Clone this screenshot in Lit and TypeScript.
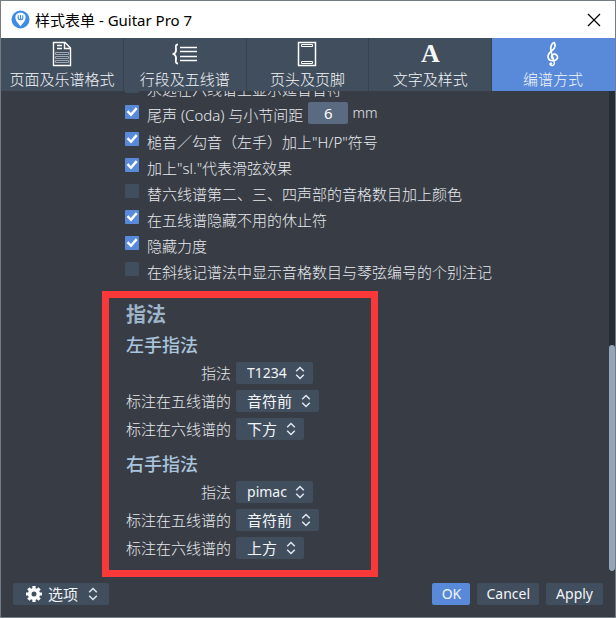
import { LitElement, html, css, svg, nothing } from "lit";
import { customElement, property, state } from "lit/decorators.js";
import { classMap } from "lit/directives/class-map.js";

const pageIcon = svg`<svg width="20" height="26" viewBox="0 0 20 26" fill="none" stroke="#fff">
  <path d="M1.5 1.5H13L18.5 7V24.5H1.5Z" stroke-width="1.4"/>
  <path d="M12.5 1.5V7.5H18.5M5 4.5H10M5 7.5H10" stroke-width="1.4"/>
  <path d="M3.500 11.500H16.500V13.500H3.500ZM3.500 15.500H16.500V17.500H3.500ZM3.500 19.500H16.500V21.500H3.500Z" stroke="#9ca8b6" stroke-width="1"/>
</svg>`;

const staffIcon = svg`<svg width="26" height="26" viewBox="0 0 26 26" fill="none" stroke="#fff">
  <path d="M6 3.500C3.200 3.500 3.800 5.500 4 8C4.200 10.500 4 12 1.500 13C4 14 4.200 15.500 4 18C3.800 20.500 3.200 22.500 6 22.500" stroke-width="1.800"/>
  <path d="M8 6.500H25M8 10.500H25M8 15.500H25M8 19.500H25" stroke-width="1.300"/>
</svg>`;

const headerIcon = svg`<svg width="20" height="26" viewBox="0 0 20 26" fill="none" stroke="#fff">
  <path d="M1.500 1.500H18.500V24.500H1.500Z" stroke-width="1.500"/>
  <path d="M4.500 3.500H15.500V5.500H4.500ZM4.500 20.500H15.500V22.500H4.500Z"/>
</svg>`;

const clefIcon = svg`<svg width="14" height="26" viewBox="0 0 14 26" fill="none" stroke="#fff" stroke-linecap="round">
  <path d="M5 10.500C3.800 5.500 6 2 8.200 1.500C9.800 4 9 7 6.500 9.200C3.500 11.600 1.600 13.500 2 16.200C2.500 19 5.200 20 8 19.600C11.500 19 12.300 16 10.800 14.200C9.200 12.400 6 13 5.600 15.200C5.400 16.500 6.200 17.400 7.200 17.600" stroke-width="1.700"/>
  <path d="M5 10L8.300 21.500C8.700 24 6.600 25 5 24.400C4 24 3.700 23.200 4.300 22.400" stroke-width="1.300"/>
  <circle cx="5" cy="22.800" r="1.300" fill="#fff" stroke="none"/>
</svg>`;

const arrows = svg`<svg class="arrows" width="10" height="14" viewBox="0 0 10 14" fill="none" stroke="#dfe6ee" stroke-width="1.500">
  <path d="M1.200 5.300L5 1.500L8.800 5.300M1.200 8.700L5 12.500L8.800 8.700"/>
</svg>`;

const gear = svg`<svg width="16" height="16" viewBox="0 0 16 16">
  <circle cx="8" cy="8" r="4.300" fill="none" stroke="#fff" stroke-width="3.600"/>
  <path d="M8 0V3M8 13V16M0 8H3M13 8H16M2.350 2.350L4.400 4.400M11.600 11.600L13.650 13.650M2.350 13.650L4.400 11.600M11.600 4.400L13.650 2.350" stroke="#fff" stroke-width="3.200"/>
</svg>`;

const logo = svg`<svg width="19" height="19" viewBox="0 0 19 19">
  <circle cx="9.500" cy="9.500" r="9" fill="#3d8de6"/>
  <path d="M9.500 16.200C7.600 13.600 4.400 11 4.400 7.400C4.400 4.400 6.700 2.800 9.500 2.800S14.600 4.400 14.600 7.400C14.600 11 11.400 13.600 9.500 16.200Z" fill="#fff"/>
  <path d="M7.200 5.200V8C7.200 10.200 11.800 10.200 11.800 8V5.200M9.500 5V9.500" fill="none" stroke="#3d8de6" stroke-width="1.100"/>
</svg>`;

const sans = css`"Noto Sans", "Noto Sans CJK SC", sans-serif`;

@customElement("pick-list")
class PickList extends LitElement {
  @property() value = "";
  @property() name = "";

  static styles = css`
    :host { display: inline-grid; justify-self: start; }
    .pick {
      grid-area: 1 / 1; appearance: none; height: 22px; margin: 0; border: 0; border-radius: 2px;
      padding: 0 26px 0 11px; background: #414e5e; color: #f2f5f8;
      font: 15px/22px ${sans}; outline: none;
    }
    .latin { font-size: 14px; }
    .arrows { grid-area: 1 / 1; place-self: center end; margin-right: 8px; pointer-events: none; }
  `;

  render() {
    const latin = /^[\x00-\x7f]+$/.test(this.value);
    return html`<select class=${classMap({ pick: true, latin })} aria-label=${this.name}>
        <option>${this.value}</option></select>${arrows}`;
  }
}

interface Check { text: string; on: boolean; amount?: string; unit?: string; }

@customElement("app-root")
class AppRoot extends LitElement {
  @state() private active = 4;

  private tabs = [
    { label: "页面及乐谱格式", icon: pageIcon },
    { label: "行段及五线谱", icon: staffIcon },
    { label: "页头及页脚", icon: headerIcon },
    { label: "文字及样式", icon: html`<span class="letter">A</span>` },
    { label: "编谱方式", icon: clefIcon },
  ];

  private checks: Check[] = [
    { text: "永远在六线谱上显示延音音符", on: false },
    { text: "尾声 (Coda) 与小节间距", on: true, amount: "6", unit: "mm" },
    { text: "槌音／勾音（左手）加上\"H/P\"符号", on: true },
    { text: "加上\"sl.\"代表滑弦效果", on: true },
    { text: "替六线谱第二、三、四声部的音格数目加上颜色", on: false },
    { text: "在五线谱隐藏不用的休止符", on: true },
    { text: "隐藏力度", on: true },
    { text: "在斜线记谱法中显示音格数目与琴弦编号的个别注记", on: false },
  ];

  private hands = [
    { title: "左手指法", rows: [["指法", "T1234"], ["标注在五线谱的", "音符前"], ["标注在六线谱的", "下方"]] },
    { title: "右手指法", rows: [["指法", "pimac"], ["标注在五线谱的", "音符前"], ["标注在六线谱的", "上方"]] },
  ];

  static styles = css`
    :host {
      display: flex; flex-direction: column; box-sizing: border-box; height: 100vh;
      border: 1px solid #747b82; background: #383c44; color: #e6eaee;
      font: 300 15px/26px ${sans};
    }
    button { border: 0; margin: 0; font: inherit; color: inherit; }
    .title { display: flex; align-items: center; gap: 5px; height: 37px; padding: 0 14px 0 10px; background: #fff; color: #000; flex: none; }
    .name { flex: 1; margin: 0; font-size: 15px; font-weight: 400; }
    .close { display: flex; padding: 0; background: none; }
    .tabs { display: grid; grid-template-columns: repeat(5, 1fr); height: 53px; flex: none; background: #414e5e; }
    .tab {
      display: flex; flex-direction: column; align-items: center; padding: 3px 0 0; background: #414e5e;
      border-right: 1px solid #364250; line-height: 24px; white-space: nowrap; color: #f4f6f8;
    }
    .tab.active { background: #588ad9; border-color: #588ad9; }
    .letter { height: 26px; font: bold 26px/26px "Liberation Serif", serif; }
    .body { display: flex; flex: 1; min-height: 0; }
    .content { display: flex; flex: 1; flex-direction: column; justify-content: flex-end; overflow: hidden; padding-left: 101px; }
    .row { display: flex; align-items: flex-start; padding-left: 23px; min-height: 26px; flex: none; }
    .row.wide { min-height: 27px; }
    .box { appearance: none; width: 14px; height: 14px; margin: 3px 8px 0 0; border-radius: 1px; background: #414e5e; display: grid; flex: none; }
    .box:checked { background: #588ad9; }
    .box:checked::before { content: ""; background: #fff; clip-path: polygon(12% 50%, 24% 38%, 42% 58%, 77% 16%, 90% 28%, 43% 82%); }
    .amount {
      width: 40px; height: 22px; box-sizing: border-box; margin: 0 4px 0 5px; padding: 0; border: 0; border-radius: 2px;
      background: #5a6a80; color: #fff; text-align: center; font: 15px/22px ${sans};
    }
    .unit { font-size: 14px; line-height: 22px; }
    .fingering { flex: none; box-sizing: border-box; width: 276px; margin-top: 6px; padding: 3px 0 11px 17px; border: 7px solid #f93939; }
    .h2 { margin: 0; font-size: 20px; line-height: 28px; font-weight: 700; color: #9db4c9; }
    .h3 { margin: 0; font-size: 18px; line-height: 33px; font-weight: 500; color: #a9c4dd; }
    .fields { display: grid; grid-template-columns: max-content 1fr; gap: 6px 5px; line-height: 22px; }
    .fields + .h3 { margin-top: 8px; }
    .key { text-align: right; }
    .track { width: 6px; margin-bottom: 6px; display: flex; flex-direction: column; justify-content: flex-end; background: #242c34; }
    .thumb { height: 47%; border-radius: 3px; background: #93a6b7; }
    .foot { display: flex; align-items: center; gap: 7px; padding: 6px 12px 12px; flex: none; }
    .btn { height: 22px; min-width: 38px; padding: 0 9px; border-radius: 2px; background: #414e5e; font-size: 14px; font-weight: 400; line-height: 22px; color: #f2f5f8; }
    .btn:last-child { padding: 0 10px; }
    .btn.ok { background: #588ad9; }
    .btn.options { display: flex; align-items: center; gap: 6px; padding: 0 11px 0 13px; margin-right: auto; font-size: 15px; }
    .options .arrows { margin-left: 4px; }
  `;

  private check(c: Check, i: number) {
    return html`<div class=${classMap({ row: true, wide: !!c.amount })}>
      <input class="box" type="checkbox" id="c${i}" .checked=${c.on}>
      <label for="c${i}">${c.text}</label>
      ${c.amount
        ? html`<input class="amount" type="text" aria-label=${c.text} .value=${c.amount}><span class="unit">${c.unit}</span>`
        : nothing}
    </div>`;
  }

  render() {
    return html`
      <header class="title">
        ${logo}
        <h1 class="name">样式表单 - Guitar Pro 7</h1>
        <button class="close" aria-label="关闭">
          <svg width="14" height="14" viewBox="0 0 14 14" stroke="#000" stroke-width="1.200"><path d="M1 1L13 13M13 1L1 13"/></svg>
        </button>
      </header>
      <nav class="tabs">
        ${this.tabs.map((t, i) => html`<button class=${classMap({ tab: true, active: i === this.active })}
          @click=${() => (this.active = i)}>${t.icon}<span>${t.label}</span></button>`)}
      </nav>
      <main class="body">
        <div class="content">
          ${this.checks.map((c, i) => this.check(c, i))}
          <section class="fingering">
            <h2 class="h2">指法</h2>
            ${this.hands.map((h) => html`<h3 class="h3">${h.title}</h3>
              <div class="fields">
                ${h.rows.map(([key, value]) => html`<span class="key">${key}</span><pick-list .name=${key} .value=${value}></pick-list>`)}
              </div>`)}
          </section>
        </div>
        <div class="track"><div class="thumb"></div></div>
      </main>
      <footer class="foot">
        <button class="btn options">${gear}<span>选项</span>${arrows}</button>
        <button class="btn ok">OK</button>
        <button class="btn">Cancel</button>
        <button class="btn">Apply</button>
      </footer>`;
  }
}
